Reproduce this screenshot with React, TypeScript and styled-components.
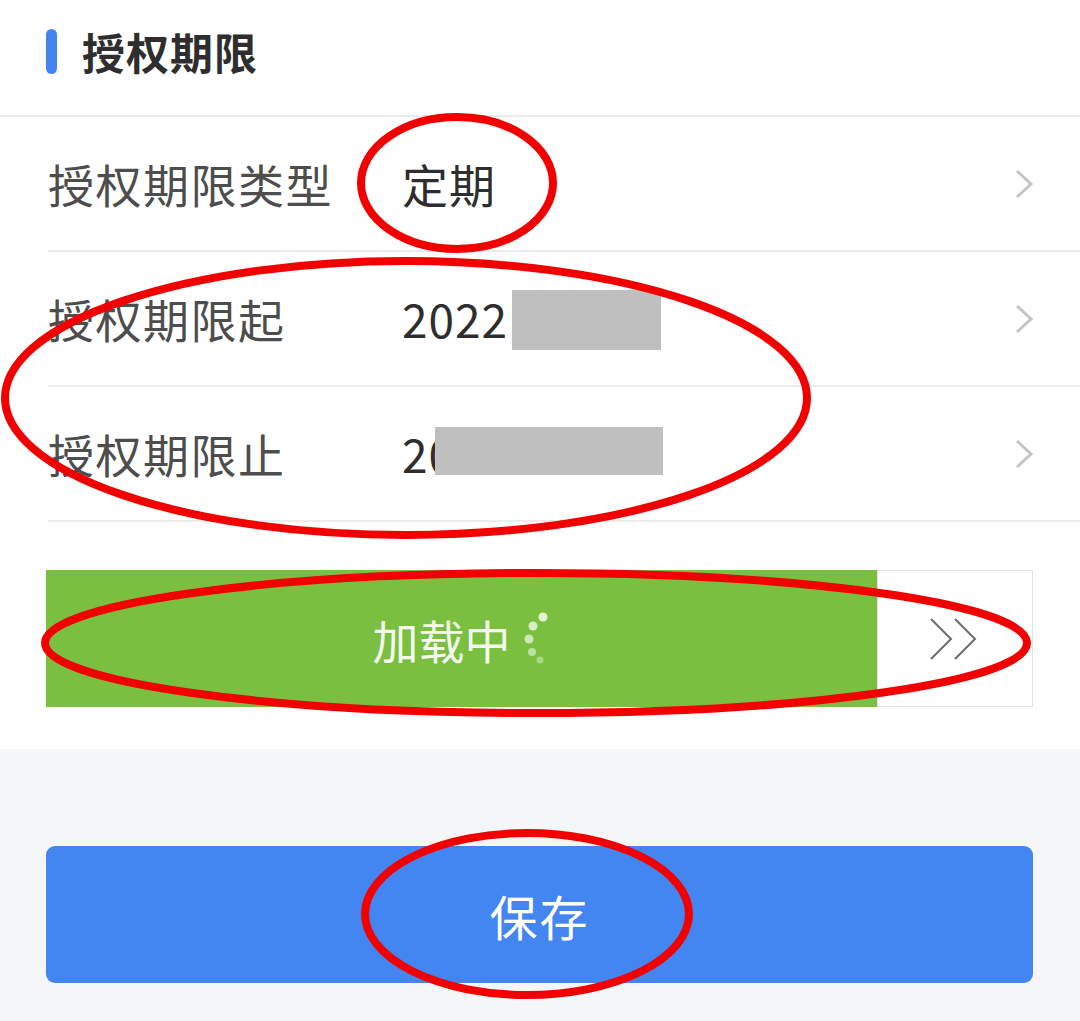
import styled, { createGlobalStyle } from "styled-components";

const GlobalStyle = createGlobalStyle`
  html, body {
    margin: 0;
    padding: 0;
    background: #f5f6f8;
  }
  body {
    font-family: "Noto Sans CJK SC", "Noto Sans", sans-serif;
  }
`;

const Page = styled.div`
  position: relative;
  width: 1080px;
  height: 1021px;
  overflow: hidden;
  background: #f5f6f8;
`;

const Card = styled.div`
  background: #ffffff;
  display: flex;
  flex-direction: column;
`;

const Header = styled.div`
  height: 117px;
  display: flex;
  align-items: center;
  gap: 25px;
  padding-left: 46px;
  border-bottom: 2px solid #ececec;
  box-sizing: border-box;
`;

const Marker = styled.div`
  width: 11px;
  height: 45px;
  border-radius: 6px;
  background: #4285f0;
  margin-top: -12px;
`;

const Title = styled.h2`
  margin: 0 0 14px;
  font-size: 43px;
  font-weight: 700;
  color: #2e2e2e;
  letter-spacing: 1px;
`;

const Row = styled.div`
  height: 135px;
  margin-left: 48px;
  padding-right: 46px;
  display: flex;
  align-items: center;
  border-bottom: 2px solid #ececec;
  box-sizing: border-box;
`;

const Label = styled.span`
  width: 354px;
  font-size: 46px;
  color: #4d4d4d;
  letter-spacing: 1.5px;
  margin-top: -2px;
`;

const Value = styled.span`
  flex: 1;
  display: flex;
  align-items: center;
  font-size: 46px;
  color: #2e2e2e;
  letter-spacing: 1px;
  margin-top: -2px;
`;

const Redact = styled.span<{ $w: number; $h: number; $dy: number; $ml: number }>`
  display: inline-block;
  width: ${(p) => p.$w}px;
  height: ${(p) => p.$h}px;
  margin-left: ${(p) => p.$ml}px;
  background: #bfbfbf;
  transform: translateY(${(p) => p.$dy}px);
`;

const SliderWrap = styled.div`
  padding: 48px 47px 42px 46px;
`;

const Slider = styled.div`
  height: 137px;
  display: flex;
`;

const Track = styled.div`
  flex: 1;
  background: #7abf3f;
  display: flex;
  align-items: center;
  justify-content: center;
  gap: 10px;
  color: #f4fbee;
  font-size: 46px;
`;

const Handle = styled.div`
  width: 156px;
  background: #ffffff;
  border: 1px solid #e2e2e2;
  box-sizing: border-box;
  display: flex;
  align-items: center;
  justify-content: center;
`;

const Footer = styled.div`
  padding: 97px 47px 0 46px;
`;

const SaveButton = styled.button`
  width: 100%;
  height: 137px;
  border: none;
  border-radius: 9px;
  background: #4385f1;
  color: #ffffff;
  font-family: inherit;
  font-size: 48px;
  letter-spacing: 2px;
`;

const Annotations = styled.svg`
  position: absolute;
  left: 0;
  top: 0;
  pointer-events: none;
`;

function Chevron() {
  return (
    <svg width="20" height="30" viewBox="0 0 20 30">
      <path d="M3 2 L17 15 L3 28" fill="none" stroke="#c4c4c4" strokeWidth="3" />
    </svg>
  );
}

function Spinner() {
  const dots = [
    [22, 6, 4.5, 0.95],
    [12, 15, 4.5, 0.85],
    [8, 28, 4.5, 0.75],
    [11, 41, 4, 0.6],
    [19, 49, 3.5, 0.45],
  ];
  return (
    <svg width="30" height="56" viewBox="0 0 30 56">
      {dots.map(([x, y, r, o], i) => (
        <circle key={i} cx={x} cy={y} r={r} fill="#e8f6dc" opacity={o} />
      ))}
    </svg>
  );
}

const rows = [
  { label: "授权期限类型", value: <>定期</> },
  {
    label: "授权期限起",
    value: (
      <>
        2022
        <Redact $w={149} $h={60} $dy={2} $ml={4} />
      </>
    ),
  },
  {
    label: "授权期限止",
    value: (
      <>
        20
        <Redact $w={228} $h={48} $dy={-2} $ml={-20} />
      </>
    ),
  },
];

export default function App() {
  return (
    <Page>
      <GlobalStyle />
      <Card>
        <Header>
          <Marker />
          <Title>授权期限</Title>
        </Header>
        {rows.map((r) => (
          <Row key={r.label}>
            <Label>{r.label}</Label>
            <Value>{r.value}</Value>
            <Chevron />
          </Row>
        ))}
        <SliderWrap>
          <Slider>
            <Track>
              <span>加载中</span>
              <Spinner />
            </Track>
            <Handle>
              <svg width="52" height="44" viewBox="0 0 52 44">
                <path d="M2 2 L22 22 L2 42 M26 2 L46 22 L26 42" fill="none" stroke="#6b6b6b" strokeWidth="2" />
              </svg>
            </Handle>
          </Slider>
        </SliderWrap>
      </Card>
      <Footer>
        <SaveButton>保存</SaveButton>
      </Footer>
      <Annotations width="1080" height="1021" viewBox="0 0 1080 1021">
        <g fill="none" stroke="#f20000" strokeWidth="8">
          <ellipse cx="457" cy="183" rx="96" ry="66" />
          <ellipse cx="406" cy="398" rx="401" ry="137" />
          <ellipse cx="536" cy="643" rx="491" ry="70" />
          <ellipse cx="527" cy="914" rx="162" ry="81" />
        </g>
      </Annotations>
    </Page>
  );
}
